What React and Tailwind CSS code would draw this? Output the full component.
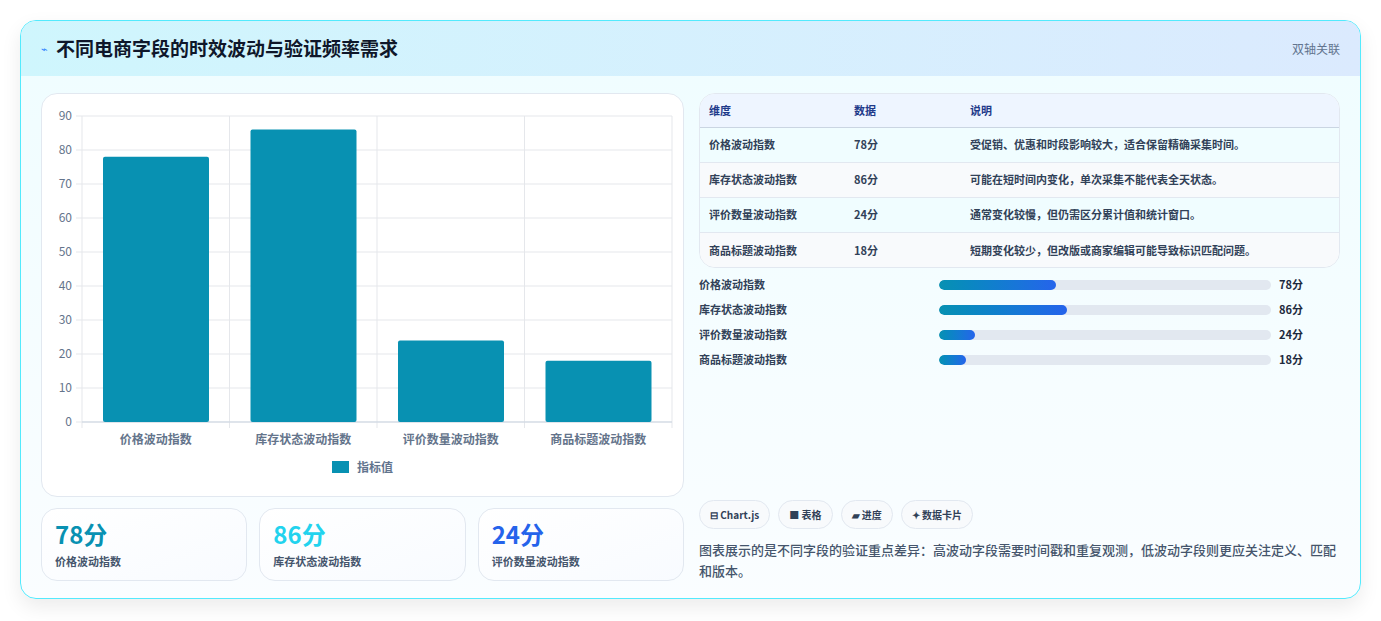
import React from 'react';

const rows = [
  { name: '价格波动指数', v: 78, note: '受促销、优惠和时段影响较大，适合保留精确采集时间。' },
  { name: '库存状态波动指数', v: 86, note: '可能在短时间内变化，单次采集不能代表全天状态。' },
  { name: '评价数量波动指数', v: 24, note: '通常变化较慢，但仍需区分累计值和统计窗口。' },
  { name: '商品标题波动指数', v: 18, note: '短期变化较少，但改版或商家编辑可能导致标识匹配问题。' },
];

const font = { fontFamily: '"Noto Sans CJK SC", "Noto Sans", sans-serif' };

const Chart = () => {
  const x0 = 40, x1 = 630, y0 = 328, yTop = 22;
  const yOf = (v) => y0 - (v / 90) * (y0 - yTop);
  const cw = (x1 - x0) / 4;
  return (
    <svg width="641" height="360" viewBox="0 0 641 360" style={font}>
      {[0, 10, 20, 30, 40, 50, 60, 70, 80, 90].map((t) => (
        <g key={t}>
          <line x1={x0 - 6} x2={x1} y1={yOf(t)} y2={yOf(t)} stroke="#e5e7eb" />
          <text x={x0 - 10} y={yOf(t) + 4} textAnchor="end" fontSize="12" fill="#64748b">{t}</text>
        </g>
      ))}
      {[0, 1, 2, 3, 4].map((i) => (
        <line key={i} x1={x0 + i * cw} x2={x0 + i * cw} y1={yTop} y2={y0 + 6} stroke="#e5e7eb" />
      ))}
      <line x1={x0} x2={x1} y1={y0} y2={y0} stroke="#cbd5e1" />
      {rows.map((r, i) => (
        <g key={r.name}>
          <rect x={x0 + i * cw + 21} y={yOf(r.v)} width={106} height={y0 - yOf(r.v)} rx="2" fill="#0891b2" />
          <text x={x0 + i * cw + cw / 2} y={y0 + 22} textAnchor="middle" fontSize="12" fontWeight="600" fill="#64748b">{r.name}</text>
        </g>
      ))}
    </svg>
  );
};

export default function App() {
  return (
    <div className="min-h-screen bg-white p-5" style={font}>
      <div className="rounded-2xl border border-cyan-300 bg-gradient-to-b from-[#effdff] to-[#fafdff] shadow-[0_8px_20px_rgba(0,0,0,0.08)] overflow-hidden">
        <div className="h-[55px] flex items-center justify-between px-5 bg-gradient-to-r from-[#cff6fd] to-[#dbeafe]">
          <div className="flex items-center gap-2">
            <span className="text-[11px] text-blue-500">⌁</span>
            <h1 className="text-[19px] font-bold text-[#0f172a]">不同电商字段的时效波动与验证频率需求</h1>
          </div>
          <span className="text-[12px] text-slate-500">双轴关联</span>
        </div>
        <div className="flex gap-[15px] px-5 pt-[17px] pb-[17px]">
          <div className="w-[643px] flex flex-col gap-[11px]">
            <div className="relative h-[404px] rounded-2xl border border-slate-200 bg-white">
              <Chart />
              <div className="absolute left-0 right-0 top-[364px] flex justify-center items-center gap-2 text-[12px] text-slate-500 font-semibold">
                <span className="w-[17px] h-[12px] bg-[#0891b2]" />
                指标值
              </div>
            </div>
            <div className="grid grid-cols-3 gap-3">
              {[
                ['78分', '价格波动指数', 'text-[#0891b2]'],
                ['86分', '库存状态波动指数', 'text-[#22d3ee]'],
                ['24分', '评价数量波动指数', 'text-[#2563eb]'],
              ].map(([v, l, c]) => (
                <div key={l} className="h-[73px] rounded-2xl border border-slate-200 bg-gradient-to-br from-white to-[#f8fbff] px-[13px] pt-[10px]">
                  <div className={`text-[24px] leading-[30px] font-bold ${c}`}>{v}</div>
                  <div className="text-[11px] text-slate-600 font-semibold mt-[4px]">{l}</div>
                </div>
              ))}
            </div>
          </div>
          <div className="flex-1 flex flex-col">
            <div className="rounded-2xl border border-slate-200 overflow-hidden bg-white">
              <table className="w-full text-[11px] font-semibold text-slate-700">
                <thead>
                  <tr className="bg-[#eef5ff] text-[#1e3a8a] h-[33px] border-b border-slate-300">
                    <th className="text-left pl-[9px] w-[154px]">维度</th>
                    <th className="text-left w-[116px]">数据</th>
                    <th className="text-left">说明</th>
                  </tr>
                </thead>
                <tbody>
                  {rows.map((r, i) => (
                    <tr key={r.name} className={`h-[35px] ${i < 3 ? 'border-b border-slate-200' : ''} ${i % 2 ? 'bg-[#f8fafc]' : 'bg-[#f0fdff]'}`}>
                      <td className="pl-[9px]">{r.name}</td>
                      <td>{r.v}分</td>
                      <td>{r.note}</td>
                    </tr>
                  ))}
                </tbody>
              </table>
            </div>
            <div className="mt-[10px] flex flex-col gap-[12px]">
              {rows.map((r) => (
                <div key={r.name} className="flex items-center h-[13px] text-[11px] font-semibold text-slate-700">
                  <span className="w-[240px]">{r.name}</span>
                  <div className="w-[332px] h-[10px] rounded-full bg-slate-200 overflow-hidden">
                    <div className="h-full rounded-full bg-gradient-to-r from-[#0891b2] to-[#2563eb]" style={{ width: `${r.v * 0.45}%` }} />
                  </div>
                  <span className="ml-[8px] text-slate-800">{r.v}分</span>
                </div>
              ))}
            </div>
            <div className="mt-auto flex gap-2">
              {['⊟ Chart.js', '■ 表格', '▰ 进度', '✦ 数据卡片'].map((t) => (
                <span key={t} className="h-[29px] px-[10px] flex items-center rounded-full border border-slate-200 bg-[#f8fafc] text-[10px] font-semibold text-slate-700">{t}</span>
              ))}
            </div>
            <p className="mt-[10px] text-[13px] leading-[21px] text-slate-600 font-medium">
              图表展示的是不同字段的验证重点差异：高波动字段需要时间戳和重复观测，低波动字段则更应关注定义、匹配和版本。
            </p>
          </div>
        </div>
      </div>
    </div>
  );
}
